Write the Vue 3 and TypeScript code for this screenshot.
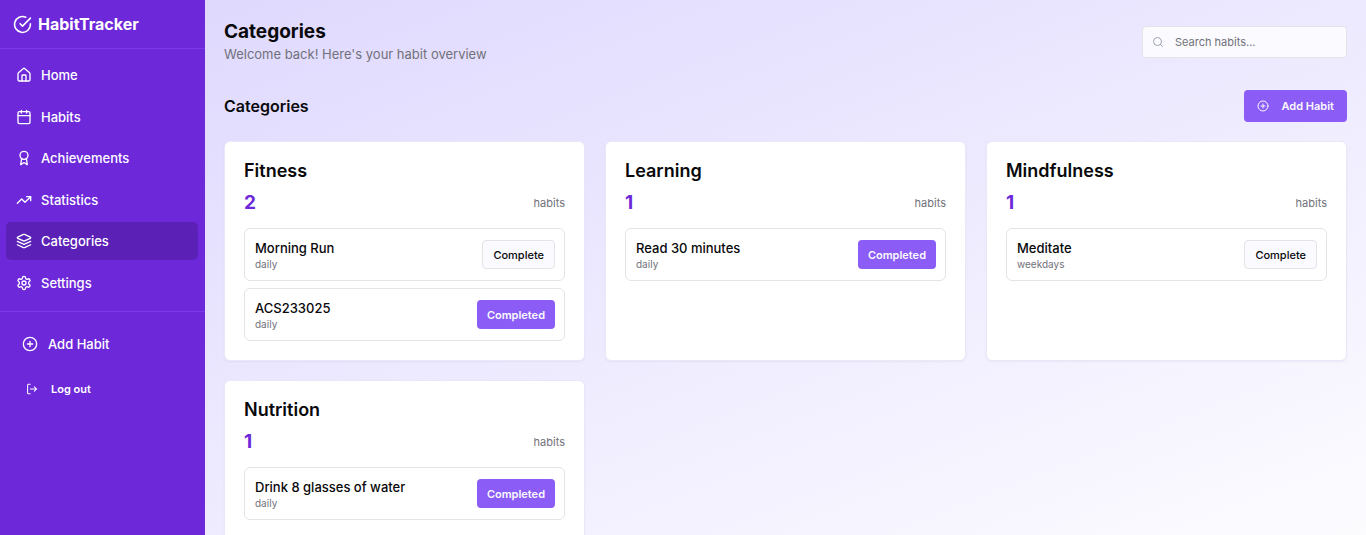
<script setup lang="ts">
import { ref, computed } from 'vue'

interface Habit {
  name: string
  frequency: string
  done: boolean
}

interface Category {
  name: string
  habits: Habit[]
}

const navItems = ['Home', 'Habits', 'Achievements', 'Statistics', 'Categories', 'Settings']
const active = ref('Categories')
const query = ref('')

const categories = ref<Category[]>([
  {
    name: 'Fitness',
    habits: [
      { name: 'Morning Run', frequency: 'daily', done: false },
      { name: 'ACS233025', frequency: 'daily', done: true },
    ],
  },
  { name: 'Learning', habits: [{ name: 'Read 30 minutes', frequency: 'daily', done: true }] },
  { name: 'Mindfulness', habits: [{ name: 'Meditate', frequency: 'weekdays', done: false }] },
  { name: 'Nutrition', habits: [{ name: 'Drink 8 glasses of water', frequency: 'daily', done: true }] },
])

const visible = computed(() => {
  const q = query.value.trim().toLowerCase()
  if (!q) return categories.value
  return categories.value.filter((c) => c.habits.some((h) => h.name.toLowerCase().includes(q)))
})
</script>

<template>
  <div class="app">
    <aside class="sidebar">
      <div class="brand">
        <svg class="icon brand-icon" viewBox="0 0 24 24" aria-hidden="true">
          <path d="M22 11.08V12a10 10 0 1 1-5.93-9.14" />
          <path d="m9 11 3 3L22 4" />
        </svg>
        <span>HabitTracker</span>
      </div>

      <nav class="nav">
        <a
          v-for="item in navItems"
          :key="item"
          href="#"
          class="nav-link"
          :class="{ active: item === active }"
          @click.prevent="active = item"
        >
          <svg class="icon" viewBox="0 0 24 24" aria-hidden="true">
            <template v-if="item === 'Home'">
              <path d="M15 21v-8a1 1 0 0 0-1-1h-4a1 1 0 0 0-1 1v8" />
              <path d="M3 10a2 2 0 0 1 .709-1.528l7-5.999a2 2 0 0 1 2.582 0l7 5.999A2 2 0 0 1 21 10v9a2 2 0 0 1-2 2H5a2 2 0 0 1-2-2z" />
            </template>
            <template v-else-if="item === 'Habits'">
              <path d="M8 2v4M16 2v4M3 10h18" />
              <rect x="3" y="4" width="18" height="18" rx="2" />
            </template>
            <template v-else-if="item === 'Achievements'">
              <path d="m15.477 12.89 1.515 8.526a.5.5 0 0 1-.81.47l-3.58-2.687a1 1 0 0 0-1.197 0l-3.586 2.686a.5.5 0 0 1-.81-.469l1.514-8.526" />
              <circle cx="12" cy="8" r="6" />
            </template>
            <template v-else-if="item === 'Statistics'">
              <path d="m22 7-8.5 8.5-5-5L2 17" />
              <path d="M16 7h6v6" />
            </template>
            <template v-else-if="item === 'Categories'">
              <path d="m12.83 2.18a2 2 0 0 0-1.66 0L2.6 6.08a1 1 0 0 0 0 1.83l8.58 3.91a2 2 0 0 0 1.66 0l8.58-3.9a1 1 0 0 0 0-1.83Z" />
              <path d="m22 17.65-9.17 4.16a2 2 0 0 1-1.66 0L2 17.65" />
              <path d="m22 12.65-9.17 4.16a2 2 0 0 1-1.66 0L2 12.65" />
            </template>
            <template v-else>
              <path d="M12.22 2h-.44a2 2 0 0 0-2 2v.18a2 2 0 0 1-1 1.73l-.43.25a2 2 0 0 1-2 0l-.15-.08a2 2 0 0 0-2.73.73l-.22.38a2 2 0 0 0 .73 2.73l.15.1a2 2 0 0 1 1 1.72v.51a2 2 0 0 1-1 1.74l-.15.09a2 2 0 0 0-.73 2.73l.22.38a2 2 0 0 0 2.73.73l.15-.08a2 2 0 0 1 2 0l.43.25a2 2 0 0 1 1 1.73V20a2 2 0 0 0 2 2h.44a2 2 0 0 0 2-2v-.18a2 2 0 0 1 1-1.73l.43-.25a2 2 0 0 1 2 0l.15.08a2 2 0 0 0 2.73-.73l.22-.39a2 2 0 0 0-.73-2.73l-.15-.08a2 2 0 0 1-1-1.74v-.5a2 2 0 0 1 1-1.74l.15-.09a2 2 0 0 0 .73-2.73l-.22-.38a2 2 0 0 0-2.73-.73l-.15.08a2 2 0 0 1-2 0l-.43-.25a2 2 0 0 1-1-1.73V4a2 2 0 0 0-2-2z" />
              <circle cx="12" cy="12" r="3" />
            </template>
          </svg>
          {{ item }}
        </a>
      </nav>

      <div class="sidebar-actions">
        <button type="button" class="side-button">
          <svg class="icon" viewBox="0 0 24 24" aria-hidden="true">
            <circle cx="12" cy="12" r="10" />
            <path d="M8 12h8M12 8v8" />
          </svg>
          Add Habit
        </button>
        <button type="button" class="side-button logout">
          <svg class="icon icon-small" viewBox="0 0 15 15" aria-hidden="true">
            <path d="M5.2 1.6H3a1 1 0 0 0-1 1v9.8a1 1 0 0 0 1 1h2.2M5.4 7.5h8M10.4 4.7l2.9 2.8-2.9 2.8" />
          </svg>
          Log out
        </button>
      </div>
    </aside>

    <main class="main">
      <header class="header">
        <div>
          <h1>Categories</h1>
          <p>Welcome back! Here's your habit overview</p>
        </div>
        <label class="search">
          <svg class="icon icon-small" viewBox="0 0 24 24" aria-hidden="true">
            <circle cx="11" cy="11" r="8" />
            <path d="m21 21-4.3-4.3" />
          </svg>
          <input v-model="query" type="search" placeholder="Search habits..." aria-label="Search habits" />
        </label>
      </header>

      <div class="section-head">
        <h2>Categories</h2>
        <button type="button" class="button primary add">
          <svg class="icon icon-small" viewBox="0 0 24 24" aria-hidden="true">
            <circle cx="12" cy="12" r="10" />
            <path d="M8 12h8M12 8v8" />
          </svg>
          Add Habit
        </button>
      </div>

      <section class="grid">
        <article v-for="category in visible" :key="category.name" class="card">
          <h3>{{ category.name }}</h3>
          <div class="count">
            <strong>{{ category.habits.length }}</strong>
            <span>habits</span>
          </div>
          <ul class="habits">
            <li v-for="habit in category.habits" :key="habit.name" class="habit">
              <div>
                <div class="habit-name">{{ habit.name }}</div>
                <div class="habit-frequency">{{ habit.frequency }}</div>
              </div>
              <button
                type="button"
                class="button"
                :class="habit.done ? 'primary' : 'outline'"
                @click="habit.done = !habit.done"
              >
                {{ habit.done ? 'Completed' : 'Complete' }}
              </button>
            </li>
          </ul>
        </article>
      </section>
    </main>
  </div>
</template>

<style>
body {
  margin: 0;
}
</style>

<style scoped>
.app {
  display: flex;
  height: 100vh;
  font-family: Inter, 'Liberation Sans', sans-serif;
  font-size: 13px;
  color: #09090b;
  background: linear-gradient(to bottom right, #ddd6fe, #fcfcff);
}

.app *,
.app {
  box-sizing: border-box;
}

h1,
h2,
h3,
p,
ul {
  margin: 0;
  padding: 0;
}

button,
input {
  font-family: inherit;
  color: inherit;
}

button {
  cursor: pointer;
}

.icon {
  width: 16px;
  height: 16px;
  flex: none;
  fill: none;
  stroke: currentColor;
  stroke-width: 2;
  stroke-linecap: round;
  stroke-linejoin: round;
}

.icon-small {
  width: 12px;
  height: 12px;
}

.sidebar {
  flex: none;
  width: 205px;
  color: #fff;
  background: #6d28d9;
}

.brand {
  display: flex;
  align-items: center;
  gap: 6px;
  height: 49px;
  padding: 0 13px;
  border-bottom: 1px solid #7c3aed;
  font-size: 16px;
  font-weight: 700;
}

.brand-icon {
  width: 19px;
  height: 19px;
}

.nav {
  display: flex;
  flex-direction: column;
  justify-content: space-between;
  height: 246px;
  margin: 7px 7px 9px 6px;
}

.nav-link {
  display: flex;
  align-items: center;
  gap: 9px;
  height: 38px;
  padding: 0 10px;
  border-radius: 5px;
  color: #fff;
  font-weight: 500;
  text-decoration: none;
}

.nav-link.active {
  background: #5b21b6;
}

.sidebar-actions {
  display: flex;
  flex-direction: column;
  align-items: flex-start;
  gap: 13px;
  padding: 16px 13px;
  border-top: 1px solid #7c3aed;
}

.side-button {
  display: flex;
  align-items: center;
  gap: 10px;
  height: 32px;
  padding: 0 9px;
  border: 0;
  background: none;
  font-size: 13px;
  font-weight: 500;
}

.logout {
  gap: 13px;
  padding: 0 13px;
  font-size: 11px;
  font-weight: 600;
}

.logout .icon {
  stroke-width: 1.3;
}

.main {
  flex: 1;
  min-width: 0;
  padding: 19px;
  overflow-y: auto;
  scrollbar-width: none;
}

.header,
.section-head {
  display: flex;
  align-items: center;
  justify-content: space-between;
}

.header {
  margin-bottom: 26px;
}

h1 {
  font-size: 19px;
  font-weight: 700;
  line-height: 26px;
}

.header p {
  color: #71717a;
  line-height: 19px;
}

.search {
  display: flex;
  align-items: center;
  gap: 11px;
  width: 205px;
  height: 32px;
  padding: 0 9px;
  border: 1px solid #e4e4e7;
  border-radius: 4px;
  background: #fafaff;
  color: #9ca3af;
}

.search input {
  flex: 1;
  min-width: 0;
  padding: 0;
  border: 0;
  outline: 0;
  background: none;
  color: #09090b;
  font-size: 11px;
}

.search input::placeholder {
  color: #71717a;
  opacity: 1;
}

.section-head {
  margin-bottom: 19px;
}

h2 {
  font-size: 16px;
  font-weight: 600;
}

.button {
  display: flex;
  align-items: center;
  height: 29px;
  padding: 0 10px;
  border: 0;
  border-radius: 4px;
  font-size: 11px;
  font-weight: 500;
}

.primary {
  background: #8b5cf6;
  color: #fafaff;
  font-weight: 600;
}

.outline {
  border: 1px solid #e4e4e7;
  background: #fafaff;
}

.add {
  gap: 13px;
  height: 32px;
  padding: 0 13px;
}

.grid {
  display: grid;
  grid-template-columns: repeat(3, 1fr);
  gap: 19px 20px;
}

.card {
  padding: 19px;
  border: 1px solid #ebe7fb;
  border-radius: 6px;
  background: #fff;
  box-shadow: 0 1px 2px rgb(0 0 0 / 5%);
}

h3 {
  font-size: 18px;
  font-weight: 600;
  line-height: 19px;
}

.count {
  display: flex;
  align-items: center;
  justify-content: space-between;
  margin: 10px 0 12px;
  line-height: 26px;
}

.count strong {
  color: #6d28d9;
  font-size: 19px;
  font-weight: 700;
}

.count span {
  color: #71717a;
  font-size: 11px;
}

.habits {
  display: flex;
  flex-direction: column;
  gap: 7px;
  list-style: none;
}

.habit {
  display: flex;
  align-items: center;
  justify-content: space-between;
  padding: 10px 9px 10px 10px;
  border: 1px solid #e4e4e7;
  border-radius: 6px;
}

.habit-name {
  font-weight: 500;
  line-height: 19px;
}

.habit-frequency {
  color: #71717a;
  font-size: 10px;
  line-height: 12px;
}
</style>
